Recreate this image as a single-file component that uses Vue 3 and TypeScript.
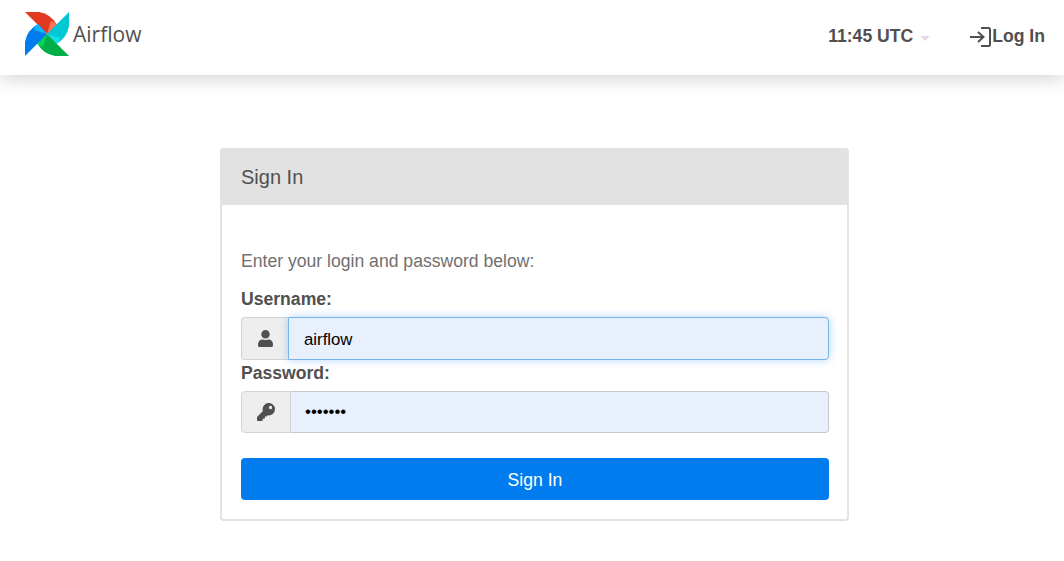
<template>
  <div class="page">
    <nav class="navbar">
      <a class="brand">
        <svg class="brand-logo" viewBox="0 0 46 46" width="46" height="46">
          <g v-for="blade in blades" :key="blade.angle" :transform="`rotate(${blade.angle} 23 23)`">
            <path d="M23 23 L1 1 L15 1 Q27 3 33 14 Z" :fill="blade.dark" />
            <path d="M23 23 L27 10 Q31 11 33 14 Z" :fill="blade.light" />
          </g>
        </svg>
        <span class="brand-name">Airflow</span>
      </a>
      <div class="nav-right">
        <span class="clock">11:45 UTC<span class="caret"></span></span>
        <a class="login">
          <svg class="login-icon" viewBox="0 0 24 24" width="24" height="24">
            <path d="M2 12 H15 M10 7 L15.5 12 L10 17 M13 3 H20.5 Q22 3 22 4.5 V19.5 Q22 21 20.5 21 H13" fill="none" stroke="#51504f" stroke-width="2" />
          </svg>
          <span>Log In</span>
        </a>
      </div>
    </nav>

    <main class="content">
      <section class="card">
        <header class="card-header">Sign In</header>
        <form class="card-body" @submit.prevent>
          <p class="hint">Enter your login and password below:</p>

          <label class="field-label" for="username">Username:</label>
          <div class="input-group">
            <span class="addon">
              <svg viewBox="0 0 448 512" width="15" height="17">
                <path d="M224 256a128 128 0 1 0 0-256 128 128 0 0 0 0 256zm90 32h-17a174 174 0 0 1-146 0h-17A134 134 0 0 0 0 422v42a48 48 0 0 0 48 48h352a48 48 0 0 0 48-48v-42a134 134 0 0 0-134-134z" fill="#51504f" />
              </svg>
            </span>
            <input id="username" class="input input-focus" type="text" value="airflow" />
          </div>

          <label class="field-label field-label-next" for="password">Password:</label>
          <div class="input-group input-group-short">
            <span class="addon addon-wide">
              <svg viewBox="0 0 512 512" width="18" height="18">
                <path d="M512 176a176 176 0 0 1-209 173l-24 27a24 24 0 0 1-18 8h-37v40a24 24 0 0 1-24 24h-40v40a24 24 0 0 1-24 24H24a24 24 0 0 1-24-24v-78c0-6 3-12 7-17l162-162A176 176 0 1 1 512 176zM336 128a48 48 0 1 0 96 0 48 48 0 0 0-96 0z" fill="#51504f" />
              </svg>
            </span>
            <input id="password" class="input input-password" type="password" value="airflow" />
          </div>

          <button class="submit" type="submit">Sign In</button>
        </form>
      </section>
    </main>
  </div>
</template>

<script setup lang="ts">
interface Blade {
  angle: number;
  dark: string;
  light: string;
}

const blades: Blade[] = [
  { angle: 0, dark: '#e43921', light: '#ff7557' },
  { angle: 90, dark: '#00c7d4', light: '#11e1ee' },
  { angle: 180, dark: '#00ad46', light: '#04d659' },
  { angle: 270, dark: '#017cee', light: '#0cb6ff' },
];
</script>

<style>
html,
body {
  margin: 0;
  background: #fff;
}
</style>

<style scoped>
.page {
  font-family: "Liberation Sans", Arial, sans-serif;
  font-size: 17.6px;
  color: #51504f;
  height: 561px;
  overflow: hidden;
}

.navbar {
  display: flex;
  align-items: center;
  justify-content: space-between;
  height: 75px;
  box-sizing: border-box;
  padding: 0 19px 8px 24px;
  background: #fff;
  box-shadow: 0 2px 20px rgba(0, 0, 0, 0.2);
}

.brand {
  display: flex;
  align-items: center;
  gap: 3px;
}

.brand-logo {
  display: block;
}

.brand-name {
  font-family: "Open Sans", sans-serif;
  font-size: 21px;
  line-height: 46px;
}

.nav-right {
  display: flex;
  align-items: center;
  margin-top: 6px;
  font-weight: 700;
}

.clock {
  display: flex;
  align-items: center;
}

.caret {
  width: 0;
  height: 0;
  margin: 3px 0 0 7px;
  border-top: 5px solid #e4dbe6;
  border-left: 5px solid transparent;
  border-right: 5px solid transparent;
}

.login {
  display: flex;
  align-items: center;
  margin-left: 38px;
}

.login-icon {
  display: block;
}

.content {
  padding: 73px 215px 0 220px;
}

.card {
  box-sizing: border-box;
  border-radius: 4px;
  border: 2px solid #e2e2e2;
  background: #fff;
}

.card-header {
  height: 57px;
  margin: -2px -2px 0;
  padding: 0 21px;
  background: #e2e2e2;
  border-radius: 4px 4px 0 0;
  font-size: 20px;
  line-height: 58px;
}

.card-body {
  padding: 0 18px 19px 19px;
}

.hint {
  margin: 46px 0 0;
  line-height: 20px;
  color: #707070;
}

.field-label {
  display: block;
  margin: 19px 0 8px;
  line-height: 19px;
  font-weight: 700;
}

.field-label-next {
  margin: 4px 0 8px;
}

.input-group {
  display: flex;
  height: 43px;
}

.input-group-short {
  height: 42px;
}

.addon {
  display: flex;
  align-items: center;
  justify-content: center;
  box-sizing: border-box;
  width: 47px;
  background: #eee;
  border: 1px solid #ced4da;
  border-right: 0;
  border-radius: 4px 0 0 4px;
}

.addon-wide {
  width: 50px;
  border-right: 1px solid #ced4da;
}

.input {
  flex: 1;
  min-width: 0;
  box-sizing: border-box;
  padding: 2px 15px 0;
  background: #e8f0fe;
  border: 1px solid #c8c8c8;
  border-radius: 0 4px 4px 0;
  outline: none;
  font-family: "Liberation Sans", Arial, sans-serif;
  font-size: 16.8px;
  color: #000;
}

.input-focus {
  border-color: #74b3ec;
  box-shadow: 0 0 10px rgba(1, 124, 238, 0.3);
}

.input-password {
  border-left: 0;
  padding: 0 14px;
}

.submit {
  display: block;
  width: 100%;
  height: 42px;
  margin-top: 25px;
  padding: 2px 0 0;
  border: 0;
  border-radius: 4px;
  background: #017cee;
  color: #fff;
  font-family: "Liberation Sans", Arial, sans-serif;
  font-size: 17.6px;
}
</style>
